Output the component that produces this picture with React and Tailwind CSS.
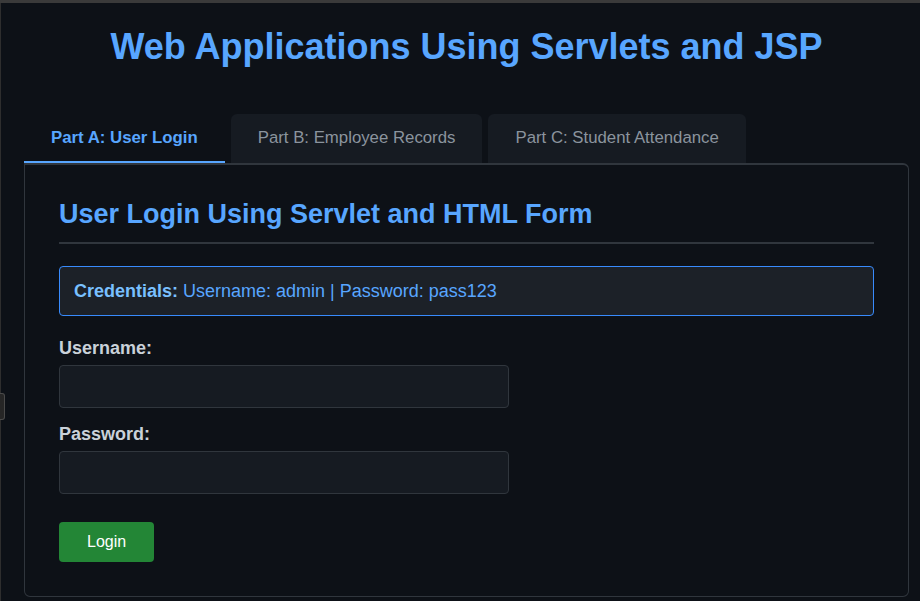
import React from 'react';

const tabs = [
  { label: 'Part A: User Login', active: true },
  { label: 'Part B: Employee Records', active: false },
  { label: 'Part C: Student Attendance', active: false },
];

export default function App() {
  return (
    <div className="relative min-h-[601px] bg-[#0d1117] font-['Liberation_Sans',Arial,sans-serif] overflow-hidden">
      {/* window chrome */}
      <div className="h-[3px] bg-[#3a3a3a]" />
      <div className="absolute left-0 top-[3px] bottom-0 w-px bg-[#2e2e2e]" />
      <div className="absolute left-0 top-[393px] h-[27px] w-[5px] rounded-r-[3px] border border-l-0 border-[#4a4a4a] bg-[#262626]" />

      <div className="pl-6 pr-[11px]">
        <h1 className="mt-[22px] text-center text-[36px] leading-[43px] font-bold text-[#58a6ff]">
          Web Applications Using Servlets and JSP
        </h1>

        <div className="mt-[46px] flex gap-[6px]">
          {tabs.map((t) => (
            <div
              key={t.label}
              className={
                t.active
                  ? 'px-[27px] py-[14px] leading-[19px] text-[16.8px] font-bold text-[#58a6ff] border-b-2 border-[#58a6ff]'
                  : 'px-[27px] py-[14px] leading-[19px] text-[16.8px] text-[#8b949e] bg-[#161b22] rounded-t-[6px] border-b-2 border-transparent'
              }
            >
              {t.label}
            </div>
          ))}
        </div>

        <div className="border border-t-2 border-[#30363d] rounded-b-[6px] rounded-tr-[6px] px-[34px] pt-[34px] pb-[34px]">
          <h2 className="text-[27px] leading-[30px] font-bold text-[#58a6ff] pb-[13px] border-b-2 border-[#30363d]">
            User Login Using Servlet and HTML Form
          </h2>

          <div className="mt-[22px] rounded-[4px] border border-[#388bfd] bg-[#1c2128] px-[14px] py-[14px] text-[18px] leading-[20px] text-[#58a6ff]">
            <strong className="text-[#79c0ff]">Credentials:</strong> Username: admin | Password: pass123
          </div>

          <form className="mt-[22px]" onSubmit={(e) => e.preventDefault()}>
            <label className="block text-[18px] leading-[21px] font-bold text-[#c9d1d9]">Username:</label>
            <input
              type="text"
              className="mt-[6px] block w-[450px] h-[43px] rounded-[4px] border border-[#30363d] bg-[#161b22] px-3 text-[#c9d1d9] outline-none"
            />
            <label className="mt-[16px] block text-[18px] leading-[21px] font-bold text-[#c9d1d9]">Password:</label>
            <input
              type="password"
              className="mt-[6px] block w-[450px] h-[43px] rounded-[4px] border border-[#30363d] bg-[#161b22] px-3 text-[#c9d1d9] outline-none"
            />
            <button
              type="submit"
              className="mt-[28px] h-[40px] rounded-[4px] bg-[#238636] px-[28px] text-[16px] text-white"
            >
              Login
            </button>
          </form>
        </div>
      </div>
    </div>
  );
}
